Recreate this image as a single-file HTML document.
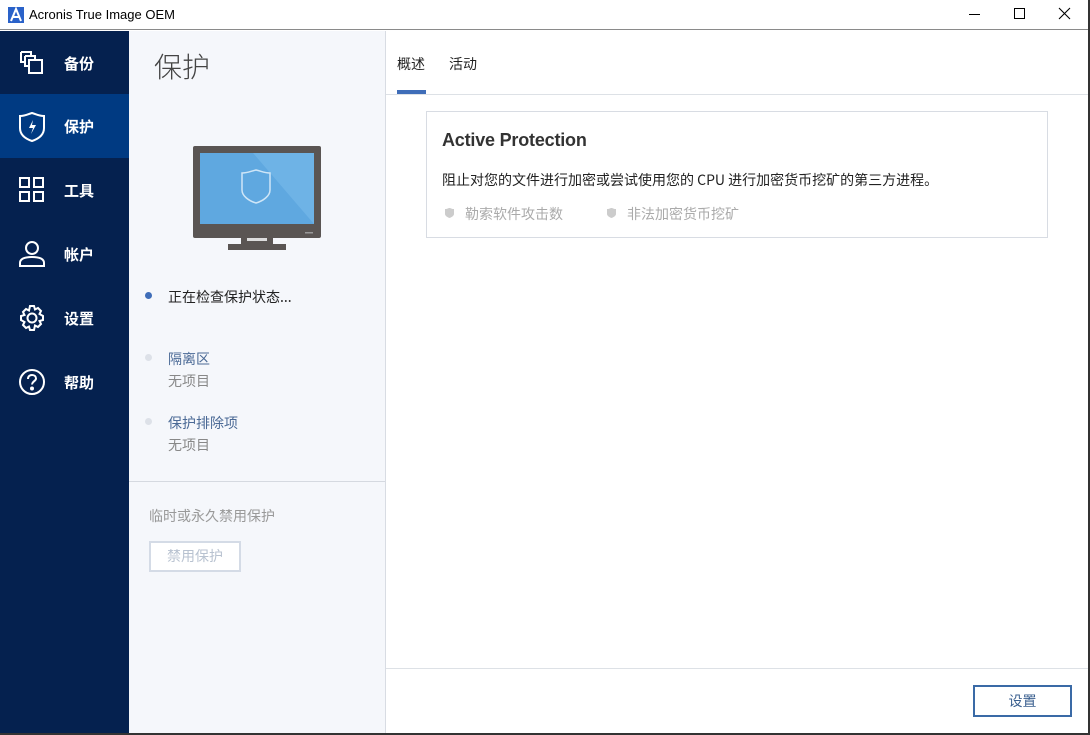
<!DOCTYPE html>
<html><head><meta charset="utf-8"><style>
*{margin:0;padding:0;box-sizing:border-box}
body{width:1090px;height:735px;overflow:hidden;font-family:"Liberation Sans","Microsoft YaHei","Noto Sans CJK SC",sans-serif;background:#fff;position:relative}
.abs{position:absolute}
#title{left:0;top:0;width:1090px;height:30px;background:#fff;border-bottom:1px solid #8a8a8a}
#side{left:0;top:31px;width:129px;height:702px;background:#05214f}
.item{position:absolute;left:0;width:129px;height:64px;color:#fff;font-size:15px;font-weight:bold}
.item span{position:absolute;left:64px;top:22px}
.item svg{position:absolute;left:18px;top:18px}
#mid{left:129px;top:31px;width:257px;height:702px;background:#f5f7fb;border-right:1px solid #d8dce3}
#right{left:386px;top:31px;width:702px;height:702px;background:#fff}
#frameR{left:1088px;top:0;width:2px;height:735px;background:#333}
#frameB{left:0;top:733px;width:1090px;height:2px;background:#333}
.cjk{font-family:"Microsoft YaHei","Noto Sans CJK SC",sans-serif}
</style></head><body>
<div id="title" class="abs">
 <svg class="abs" style="left:8px;top:7px" width="16" height="16"><rect width="16" height="16" fill="#2a62c9"/><path d="M3 14L8 2L13 14M5.2 10H10.8" stroke="#fff" stroke-width="2" fill="none"/></svg>
 <div class="abs" style="left:29px;top:7px;font-size:13px;color:#000">Acronis True Image OEM</div>
 <div class="abs" style="left:969px;top:14px;width:11px;height:1px;background:#000"></div>
 <div class="abs" style="left:1014px;top:8px;width:11px;height:11px;border:1px solid #000"></div>
 <svg class="abs" style="left:1058px;top:7px" width="13" height="13"><path d="M1 1L12 12M12 1L1 12" stroke="#000" stroke-width="1.1"/></svg>
</div>
<div id="side" class="abs">
 <div class="item cjk" style="top:0"><svg width="28" height="28" viewBox="0 0 28 28" fill="none" stroke="#fff" stroke-width="2"><path d="M3 3h10v4M3 3v10h4"/><path d="M7 7h10v4M7 7v10h4"/><rect x="11" y="11" width="13" height="13"/></svg><span>备份</span></div>
 <div class="item cjk" style="top:63px;background:#003a82"><svg width="28" height="30" viewBox="0 0 28 30" fill="none" stroke="#fff" stroke-width="2"><path d="M2 4C8 4 10 2 14 1C18 2 20 4 26 4V16C26 23 20 27 14 29C8 27 2 23 2 16Z"/><path d="M15 8L11 16H15L13 22L18 13H14Z" fill="#fff" stroke="none"/></svg><span>保护</span></div>
 <div class="item cjk" style="top:127px"><svg width="28" height="28" viewBox="0 0 28 28" fill="none" stroke="#fff" stroke-width="2"><rect x="2" y="2" width="9" height="9"/><rect x="16" y="2" width="9" height="9"/><rect x="2" y="16" width="9" height="9"/><rect x="16" y="16" width="9" height="9"/></svg><span>工具</span></div>
 <div class="item cjk" style="top:191px"><svg width="28" height="28" viewBox="0 0 28 28" fill="none" stroke="#fff" stroke-width="2"><circle cx="14" cy="8" r="6"/><path d="M2 26V23C2 19 6 17 14 17C22 17 26 19 26 23V26Z"/></svg><span>帐户</span></div>
 <div class="item cjk" style="top:255px"><svg width="28" height="28" viewBox="0 0 28 28" fill="none" stroke="#fff" stroke-width="2"><circle cx="14" cy="14" r="4.5"/><path d="M12 2h4l1 3.5 3-1.5 3 3-1.5 3L25 12v4l-3.5 1 1.5 3-3 3-3-1.5L16 26h-4l-1-3.5-3 1.5-3-3 1.5-3L3 16v-4l3.5-1L5 8l3-3 3 1.5Z"/></svg><span>设置</span></div>
 <div class="item cjk" style="top:319px"><svg width="28" height="28" viewBox="0 0 28 28" fill="none" stroke="#fff" stroke-width="2"><circle cx="14" cy="14" r="12"/><path d="M10 11C10 8 12 7 14 7C16.5 7 18 8.5 18 10.5C18 13 14 13.5 14 16.5"/><circle cx="14" cy="20.5" r="1" fill="#fff"/></svg><span>帮助</span></div>
</div>
<div id="mid" class="abs">
 <div class="abs cjk" style="left:25px;top:15px;font-size:28px;color:#444;font-weight:300">保护</div>
 <svg class="abs" style="left:64px;top:115px" width="129" height="106" viewBox="0 0 129 106"><rect x="0" y="0" width="128" height="92" rx="2" fill="#5a5553"/><rect x="7" y="7" width="114" height="71" fill="#5fa8e0"/><path d="M60 7H121V78Z" fill="#6eb3e6"/><path d="M49 27C55 27 58 25 63 24C68 25 71 27 77 27V44C77 50 70 55 63 57C56 55 49 50 49 44Z" fill="none" stroke="#cfe6f7" stroke-width="1.5"/><rect x="48" y="92" width="32" height="6" fill="#5a5553"/><rect x="54" y="92" width="20" height="3" fill="#ddd"/><rect x="35" y="98" width="58" height="6" fill="#5a5553"/><rect x="112" y="86" width="8" height="1.5" fill="#999"/></svg>
 <div class="abs" style="left:16px;top:261px;width:7px;height:7px;border-radius:50%;background:#3f6db8"></div>
 <div class="abs cjk" style="left:39px;top:256px;font-size:14px;color:#222">正在检查保护状态...</div>
 <div class="abs" style="left:16px;top:323px;width:7px;height:7px;border-radius:50%;background:#dde1e8"></div>
 <div class="abs cjk" style="left:39px;top:318px;font-size:14px;color:#4b6a96">隔离区</div>
 <div class="abs cjk" style="left:39px;top:340px;font-size:14px;color:#888">无项目</div>
 <div class="abs" style="left:16px;top:387px;width:7px;height:7px;border-radius:50%;background:#dde1e8"></div>
 <div class="abs cjk" style="left:39px;top:382px;font-size:14px;color:#4b6a96">保护排除项</div>
 <div class="abs cjk" style="left:39px;top:404px;font-size:14px;color:#888">无项目</div>
 <div class="abs" style="left:0;top:450px;width:256px;height:1px;background:#d5d9e0"></div>
 <div class="abs cjk" style="left:20px;top:475px;font-size:14px;color:#999">临时或永久禁用保护</div>
 <div class="abs cjk" style="left:20px;top:510px;width:92px;height:31px;border:2px solid #d4dbe6;background:#fff;color:#b8c2d0;font-size:14px;text-align:center;line-height:27px">禁用保护</div>
</div>
<div id="right" class="abs">
 <div class="abs cjk" style="left:11px;top:23px;font-size:14px;color:#222">概述</div>
 <div class="abs cjk" style="left:63px;top:23px;font-size:14px;color:#222">活动</div>
 <div class="abs" style="left:11px;top:59px;width:29px;height:4px;background:#3f6db8"></div>
 <div class="abs" style="left:0;top:63px;width:702px;height:1px;background:#dde1e6"></div>
 <div class="abs" style="left:40px;top:80px;width:622px;height:127px;border:1px solid #d8dce3"></div>
 <div class="abs" style="left:56px;top:99px;font-size:18px;color:#333;font-weight:bold;letter-spacing:-0.2px">Active Protection</div>
 <div class="abs cjk" style="left:56px;top:139px;font-size:14px;color:#222">阻止对您的文件进行加密或尝试使用您的 CPU 进行加密货币挖矿的第三方进程。</div>
 <svg class="abs" style="left:59px;top:177px" width="9" height="10"><path d="M0 1C3 1 3 0 4.5 0C6 0 6 1 9 1V6C9 8 6 9.5 4.5 10C3 9.5 0 8 0 6Z" fill="#ccc"/></svg>
 <div class="abs cjk" style="left:79px;top:173px;font-size:14px;color:#aaa">勒索软件攻击数</div>
 <svg class="abs" style="left:221px;top:177px" width="9" height="10"><path d="M0 1C3 1 3 0 4.5 0C6 0 6 1 9 1V6C9 8 6 9.5 4.5 10C3 9.5 0 8 0 6Z" fill="#ccc"/></svg>
 <div class="abs cjk" style="left:241px;top:173px;font-size:14px;color:#aaa">非法加密货币挖矿</div>
 <div class="abs" style="left:0;top:637px;width:702px;height:1px;background:#dde1e6"></div>
 <div class="abs cjk" style="left:587px;top:654px;width:99px;height:32px;border:2px solid #3a6aa6;color:#3a5f8f;font-size:14px;text-align:center;line-height:28px">设置</div>
</div>
<div id="frameR" class="abs"></div>
<div id="frameB" class="abs"></div>
</body></html>
